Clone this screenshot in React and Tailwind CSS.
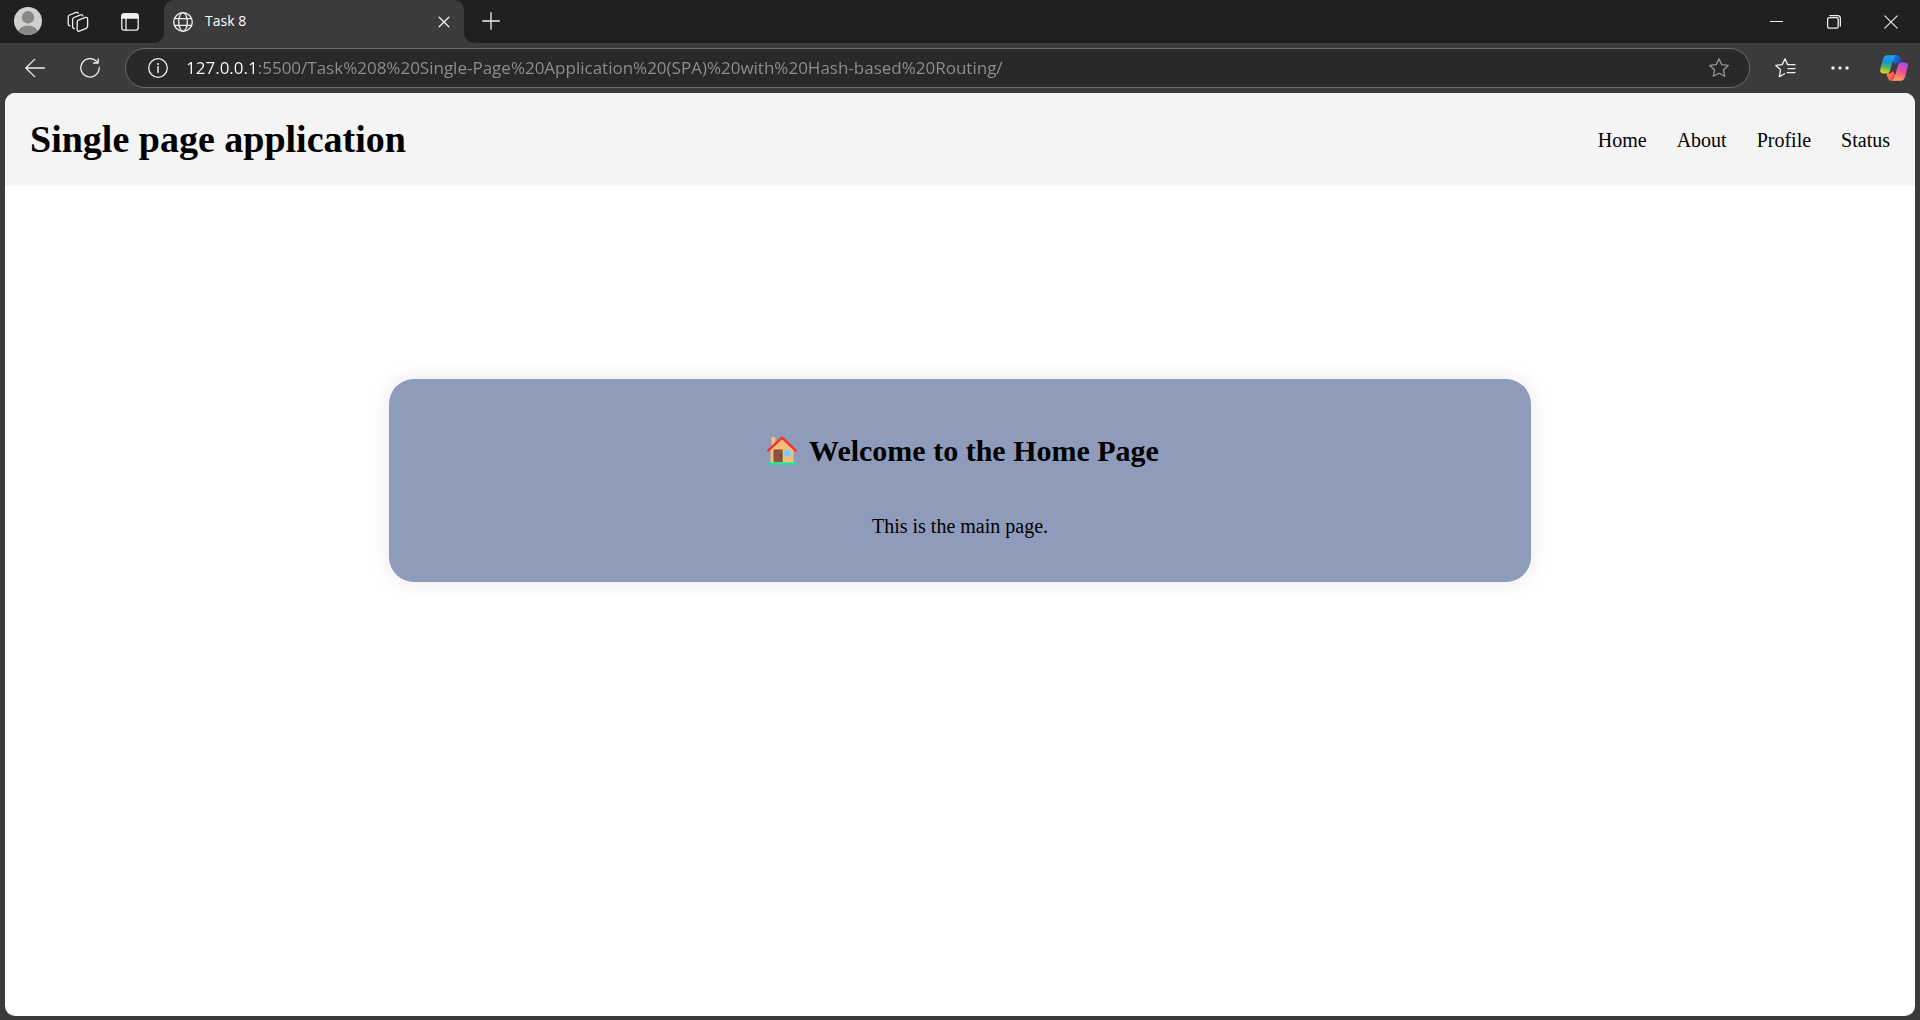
import React from "react";

const URL_TEXT =
  "127.0.0.1:5500/Task%208%20Single-Page%20Application%20(SPA)%20with%20Hash-based%20Routing/";

function Icon({ size = 20, className = "", children }) {
  return (
    <svg
      width={size}
      height={size}
      viewBox={`0 0 ${size} ${size}`}
      fill="none"
      stroke="currentColor"
      strokeWidth="1.3"
      strokeLinecap="round"
      strokeLinejoin="round"
      className={`shrink-0 ${className}`}
      aria-hidden="true"
    >
      {children}
    </svg>
  );
}

function IconButton({ label, className = "", children }) {
  return (
    <button
      type="button"
      aria-label={label}
      className={`flex h-full shrink-0 items-center justify-center ${className}`}
    >
      {children}
    </button>
  );
}

const STAR =
  "M10 0.9 L12.75 6.6 L19.2 7.45 L14.5 11.8 L15.7 18.3 L10 15.2 L4.3 18.3 L5.5 11.8 L0.8 7.45 L7.25 6.6 Z";

function TitleBar() {
  return (
    <div className="flex h-[43px] shrink-0 text-[#f0f0f0]">
      <div className="flex w-[164px] shrink-0 rounded-br-[10px] bg-[#202020]">
        <IconButton label="Profile" className="w-14 pb-px">
          <svg width="28" height="28" viewBox="0 0 28 28" aria-hidden="true">
            <clipPath id="avatar">
              <circle cx="14" cy="14" r="14" />
            </clipPath>
            <g clipPath="url(#avatar)">
              <rect width="28" height="28" fill="#d2d0ce" />
              <circle cx="14" cy="10.3" r="6.2" fill="#8a8886" />
              <ellipse cx="14" cy="26" rx="10.3" ry="7.6" fill="#8a8886" />
            </g>
          </svg>
        </IconButton>
        <IconButton label="Workspaces" className="w-11">
          <Icon size={22}>
            <path d="M11.4 9.2 L18.6 6.4 Q20.6 5.9 20.6 7.9 V15.1 Q20.6 16.7 19.2 17.3 L12.4 20.1 Q10.2 20.7 10.2 18.6 V11 Q10.2 9.7 11.4 9.2 Z" />
            <path d="M7.4 17.6 Q5.6 17.6 5.6 15.6 V8.6 Q5.6 7.1 7 6.5 L13.6 3.8 Q15.4 3.3 15.9 4.9" />
            <path d="M3 14.8 Q1.2 14.8 1.2 12.8 V6.1 Q1.2 4.6 2.6 4 L9 1.4 Q10.8 0.9 11.2 2.4" />
          </Icon>
        </IconButton>
        <IconButton label="Tab actions menu" className="w-[60px]">
          <Icon size={18}>
            <rect x="0.8" y="0.8" width="16.4" height="16.4" rx="2.4" />
            <path d="M1 5 V3 Q1 1 3 1 H15 Q17 1 17 3 V5 Z" fill="currentColor" />
            <path d="M5 5.5 V17" />
          </Icon>
        </IconButton>
      </div>
      <div className="w-[300px] shrink-0 bg-[#202020]">
        <div className="flex h-full items-center rounded-t-[10px] bg-[#3b3b3b] pr-3 pl-[9px]">
          <Icon size={20}>
            <circle cx="10" cy="10" r="9.3" />
            <ellipse cx="10" cy="10" rx="4.3" ry="9.3" />
            <path d="M1.6 6.6 H18.4 M1.6 13.4 H18.4" />
          </Icon>
          <span className="ml-3 flex-1 pb-0.5 font-['Open_Sans',sans-serif] text-sm leading-5 text-white">
            Task 8
          </span>
          <button type="button" aria-label="Close tab" className="flex size-4 items-center justify-center">
            <Icon size={12}>
              <path d="M1.2 1.2 L10.8 10.8 M10.8 1.2 L1.2 10.8" />
            </Icon>
          </button>
        </div>
      </div>
      <div className="flex flex-1 rounded-bl-[10px] bg-[#202020]">
        <IconButton label="New tab" className="w-[54px] pb-px">
          <Icon size={18}>
            <path d="M9 0.7 V17.3 M0.7 9 H17.3" />
          </Icon>
        </IconButton>
        <div className="flex-1" />
        <IconButton label="Minimize" className="w-[57px]">
          <Icon size={13}>
            <path d="M0 6.5 H13" strokeWidth="1" strokeLinecap="butt" />
          </Icon>
        </IconButton>
        <IconButton label="Restore" className="w-[57px]">
          <Icon size={14}>
            <rect x="0.6" y="2.6" width="10.6" height="10.6" rx="1.6" />
            <path d="M3 0.6 H10.6 Q13.4 0.6 13.4 3.4 V11" />
          </Icon>
        </IconButton>
        <IconButton label="Close" className="w-[58px]">
          <Icon size={14}>
            <path d="M0.8 0.8 L13.2 13.2 M13.2 0.8 L0.8 13.2" strokeWidth="1.1" />
          </Icon>
        </IconButton>
      </div>
    </div>
  );
}

function CopilotLogo() {
  return (
    <svg width="28" height="26" viewBox="0 0 28 26" aria-hidden="true">
      <defs>
        <linearGradient id="cpLeft" x1="0.5" y1="0" x2="0.35" y2="1">
          <stop offset="0" stopColor="#19a5ee" />
          <stop offset="0.4" stopColor="#1b93cf" />
          <stop offset="0.68" stopColor="#5db55f" />
          <stop offset="1" stopColor="#f8d20a" />
        </linearGradient>
        <linearGradient id="cpRight" x1="0.7" y1="0" x2="0.4" y2="1">
          <stop offset="0" stopColor="#a34df0" />
          <stop offset="0.5" stopColor="#ee5090" />
          <stop offset="1" stopColor="#ffa65c" />
        </linearGradient>
        <linearGradient id="cpTop" x1="0" y1="0" x2="1" y2="0.6">
          <stop offset="0" stopColor="#1a8fe8" />
          <stop offset="1" stopColor="#1742c4" />
        </linearGradient>
        <linearGradient id="cpBottom" x1="0" y1="0" x2="1" y2="0.4">
          <stop offset="0" stopColor="#ff9a3d" />
          <stop offset="1" stopColor="#ee4058" />
        </linearGradient>
      </defs>
      <path d="M13 0.2 H17.3 Q19.4 0.2 20.1 2.4 L21.5 7.4 H18.4 Q16 7.4 15.1 10 L12 4 Z" fill="url(#cpTop)" />
      <path d="M15.6 25.8 H10.8 Q8.7 25.8 8 23.6 L6.4 18.4 H9.4 Q11.8 18.4 12.7 15.8 L16 21 Z" fill="url(#cpBottom)" />
      <path d="M7.2 0.2 H16.5 Q14.6 0.6 13.8 3.3 L9.8 16.2 Q9 18.5 6.7 18.5 H3.8 Q-0.7 18.5 0.3 14 L2.9 4.2 Q4.1 0.2 7.2 0.2 Z" fill="url(#cpLeft)" />
      <path d="M20.8 25.8 H11.9 Q13.6 25.4 14.4 22.7 L18.2 9.6 Q18.9 7.4 21.2 7.4 H24.3 Q28.7 7.4 27.7 11.8 L25.1 21.8 Q24 25.8 20.8 25.8 Z" fill="url(#cpRight)" />
    </svg>
  );
}

function Toolbar() {
  return (
    <div className="flex h-[50px] shrink-0 items-center pl-[7px] text-[#f0f0f0]">
      <IconButton label="Back" className="w-[55px]">
        <Icon size={20}>
          <path d="M19.4 10 H0.8 M9.6 1.4 L0.8 10 L9.6 18.6" />
        </Icon>
      </IconButton>
      <IconButton label="Refresh" className="w-[55px]">
        <Icon size={20}>
          <path d="M16.8 3.6 A9.2 9.2 0 1 0 19.2 9.5 M18.2 0.8 V5 H13.6" />
        </Icon>
      </IconButton>
      <div className="ml-2 flex h-10 min-w-0 flex-1 items-center rounded-full border border-[#6a6a6a] bg-[#292929] pr-5 pl-[22px]">
        <button type="button" aria-label="View site information" className="shrink-0">
          <Icon size={20}>
            <circle cx="10" cy="10" r="9.3" />
            <path d="M10 8.8 V14.4" strokeWidth="1.5" />
            <circle cx="10" cy="6" r="1" fill="currentColor" stroke="none" />
          </Icon>
        </button>
        <input
          type="text"
          aria-label="Address and search bar"
          defaultValue={URL_TEXT}
          spellCheck={false}
          className="ml-[18px] min-w-0 flex-1 bg-linear-to-r from-white from-[71px] to-[#8f8f8f] to-[71px] bg-clip-text font-['Open_Sans',sans-serif] text-[17px] leading-6 text-transparent outline-none"
        />
        <button type="button" aria-label="Add this page to favorites" className="shrink-0 text-[#959595]">
          <Icon size={20}>
            <path d={STAR} />
          </Icon>
        </button>
      </div>
      <IconButton label="Favorites" className="ml-2 w-[54px]">
        <Icon size={20} className="overflow-visible">
          <path d="M13.4 6.6 H12.7 L10 0.9 L7.2 6.6 L0.8 7.45 L5.5 11.8 L4.3 18.6 L9.6 15.8" />
          <path d="M13.4 6.6 H20 M13 10.6 H20 M12.2 14.6 H20" />
        </Icon>
      </IconButton>
      <IconButton label="Settings and more" className="w-14">
        <svg width="18" height="4" viewBox="0 0 18 4" fill="currentColor" aria-hidden="true">
          <circle cx="2" cy="2" r="1.7" />
          <circle cx="9" cy="2" r="1.7" />
          <circle cx="16" cy="2" r="1.7" />
        </svg>
      </IconButton>
      <IconButton label="Copilot" className="w-[52px]">
        <CopilotLogo />
      </IconButton>
    </div>
  );
}

function House() {
  return (
    <svg width="30" height="30" viewBox="0 0 30 30" className="shrink-0" role="img" aria-label="House">
      <path d="M4.5 1 H8.5 V10 L4.5 13 Z" fill="#f3bd7a" />
      <path d="M3.5 13 L15 2.5 L26.5 13 V27 H3.5 Z" fill="#f3bd7a" />
      <path d="M1.2 14.6 L15 1.6 L28.8 14.6" fill="none" stroke="#f8312f" strokeWidth="2.4" strokeLinecap="round" strokeLinejoin="round" />
      <rect x="6.6" y="13.6" width="9" height="12.6" rx="1" fill="#7d4533" />
      <rect x="7.4" y="14.4" width="7.4" height="11.8" fill="#8c5543" />
      <circle cx="13.4" cy="20" r="0.8" fill="#5c2d20" />
      <rect x="17.2" y="14" width="6.6" height="6.4" rx="0.8" fill="#83cbff" />
      <rect x="0.4" y="26.4" width="29.2" height="2.2" rx="1.1" fill="#00f397" />
    </svg>
  );
}

function Page() {
  return (
    <div className="mx-[5px] mb-1 flex flex-1 flex-col overflow-hidden rounded-[10px] bg-white font-['Liberation_Serif',serif] text-xl text-black">
      <header className="flex items-center justify-between bg-[#f4f4f4] p-[25px]">
        <h1 className="text-[38px] leading-[43px] font-bold">Single page application</h1>
        <nav className="flex gap-[30px] pt-px">
          <a href="#home">Home</a>
          <a href="#about">About</a>
          <a href="#profile">Profile</a>
          <a href="#status">Status</a>
        </nav>
      </header>
      <main className="flex flex-1 flex-col items-center px-1 pt-[193px]">
        <section className="flex w-3/5 flex-col items-center gap-11 rounded-[25px] bg-[#8f9bbb] px-5 pt-[54px] pb-[42px] shadow-[0_0_20px_rgba(0,0,0,0.1)]">
          <h2 className="flex items-center gap-3 pl-1.5 text-[30px] leading-[35px] font-bold">
            <House />
            Welcome to the Home Page
          </h2>
          <p className="leading-7">This is the main page.</p>
        </section>
      </main>
    </div>
  );
}

export default function App() {
  return (
    <div className="flex min-h-screen flex-col bg-[#3b3b3b]">
      <TitleBar />
      <Toolbar />
      <Page />
    </div>
  );
}
